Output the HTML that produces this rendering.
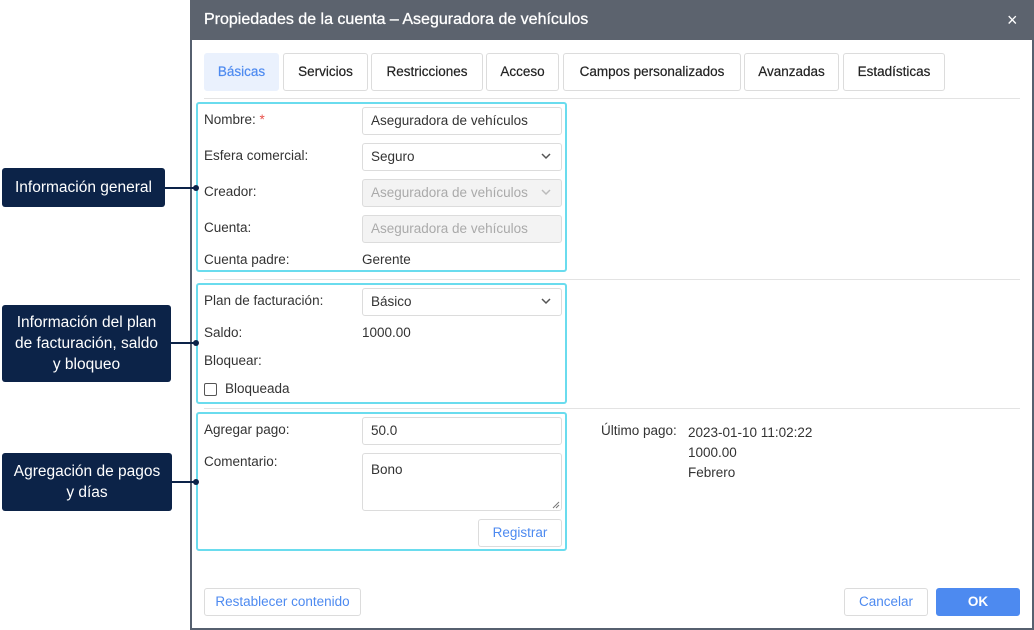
<!DOCTYPE html>
<html><head><meta charset="utf-8"><style>
*{box-sizing:border-box;margin:0;padding:0}
body{width:1034px;height:630px;background:#fff;font-family:"Liberation Sans",sans-serif;font-size:14px;color:#333;position:relative;overflow:hidden}
.a{position:absolute}
.dlg{left:190px;top:0;width:844px;height:630px;border:2px solid #56606f;border-top:0;background:#fff}
.title{left:190px;top:0;width:844px;height:40px;background:#5c636e;color:#fff;font-size:16px;line-height:40px;padding-left:14px;-webkit-text-stroke:0.3px #fff}
.tab{top:53px;height:38px;border:1px solid #dcdcdc;border-radius:3px;line-height:36px;text-align:center;color:#222;font-size:13.5px;-webkit-text-stroke:0.2px #222}
.sep{height:1px;background:#e3e3e3;left:204px;width:816px}
.box{border:2px solid #6adcee;border-radius:3px;left:196px;width:371px}
.lbl{left:204px;font-size:13.5px;color:#333}
.inp{left:362px;width:200px;height:28px;border:1px solid #dcdcdc;border-radius:3px;padding-left:8px;line-height:26px;font-size:13.5px;color:#333}
.dis{background:#f3f3f3;color:#aaa}
.chev{position:absolute;right:10px;top:8px;width:10px;height:8px}
.btn{height:28px;border:1px solid #dcdcdc;border-radius:3px;line-height:26px;text-align:center;color:#4d8af0;font-size:13.5px}
.call{left:2px;background:#0c2348;color:#fff;border-radius:3px;text-align:center;font-size:15.5px;line-height:21px;display:flex;align-items:center;justify-content:center}
.ln{height:2px;background:#0c2348}
.dot{width:6px;height:6px;border-radius:3px;background:#0c2348}
</style></head><body>
<div class="a dlg"></div>
<div class="a title">Propiedades de la cuenta – Aseguradora de vehículos</div>
<div class="a" style="left:1007px;top:11px;color:#fff;font-size:18px;line-height:18px">×</div>

<div class="a tab" style="left:204px;width:75px;background:#eaf1fd;border-color:#eaf1fd;color:#4d8af0;-webkit-text-stroke:0.2px #4d8af0">Básicas</div>
<div class="a tab" style="left:283px;width:85px">Servicios</div>
<div class="a tab" style="left:371px;width:112px">Restricciones</div>
<div class="a tab" style="left:486px;width:73px">Acceso</div>
<div class="a tab" style="left:563px;width:178px">Campos personalizados</div>
<div class="a tab" style="left:744px;width:95px">Avanzadas</div>
<div class="a tab" style="left:843px;width:102px">Estadísticas</div>
<div class="a sep" style="top:98px"></div>

<div class="a box" style="top:102px;height:170px"></div>
<div class="a lbl" style="top:112px">Nombre: <span style="color:#e8504a">*</span></div>
<div class="a inp" style="top:107px">Aseguradora de vehículos</div>
<div class="a lbl" style="top:148px">Esfera comercial:</div>
<div class="a inp" style="top:143px">Seguro<svg class="chev" viewBox="0 0 10 8"><path d="M1 2l4 4 4-4" fill="none" stroke="#555" stroke-width="1.5"/></svg></div>
<div class="a lbl" style="top:184px">Creador:</div>
<div class="a inp dis" style="top:179px">Aseguradora de vehículos<svg class="chev" viewBox="0 0 10 8"><path d="M1 2l4 4 4-4" fill="none" stroke="#bbb" stroke-width="1.5"/></svg></div>
<div class="a lbl" style="top:220px">Cuenta:</div>
<div class="a inp dis" style="top:215px">Aseguradora de vehículos</div>
<div class="a lbl" style="top:252px">Cuenta padre:</div>
<div class="a" style="left:362px;top:252px;font-size:13.5px">Gerente</div>
<div class="a sep" style="top:279px"></div>

<div class="a box" style="top:283px;height:121px"></div>
<div class="a lbl" style="top:293px">Plan de facturación:</div>
<div class="a inp" style="top:288px">Básico<svg class="chev" viewBox="0 0 10 8"><path d="M1 2l4 4 4-4" fill="none" stroke="#555" stroke-width="1.5"/></svg></div>
<div class="a lbl" style="top:325px">Saldo:</div>
<div class="a" style="left:362px;top:325px;font-size:13.5px">1000.00</div>
<div class="a lbl" style="top:353px">Bloquear:</div>
<div class="a" style="left:204px;top:383px;width:13px;height:13px;border:1px solid #555;border-radius:2px"></div>
<div class="a" style="left:225px;top:381px;font-size:13.5px">Bloqueada</div>
<div class="a sep" style="top:408px"></div>

<div class="a box" style="top:412px;height:139px"></div>
<div class="a lbl" style="top:422px">Agregar pago:</div>
<div class="a inp" style="top:417px">50.0</div>
<div class="a lbl" style="top:454px">Comentario:</div>
<div class="a inp" style="top:453px;height:58px;padding-top:7px;line-height:18px">Bono</div>
<svg class="a" style="left:552px;top:501px" width="8" height="8"><path d="M1 7L7 1M4 7L7 4" stroke="#777" stroke-width="1"/></svg>
<div class="a btn" style="left:478px;top:519px;width:84px">Registrar</div>

<div class="a" style="left:601px;top:423px;font-size:13.5px">Último pago:</div>
<div class="a" style="left:688px;top:423px;font-size:13.5px;line-height:20px">2023-01-10 11:02:22<br>1000.00<br>Febrero</div>

<div class="a btn" style="left:204px;top:588px;width:157px">Restablecer contenido</div>
<div class="a btn" style="left:844px;top:588px;width:84px">Cancelar</div>
<div class="a btn" style="left:936px;top:588px;width:84px;background:#4d8af0;border-color:#4d8af0;color:#fff;font-weight:bold">OK</div>

<div class="a call" style="top:168px;width:163px;height:39px">Información general</div>
<div class="a ln" style="left:165px;top:187px;width:30px"></div>
<div class="a dot" style="left:193px;top:185px"></div>
<div class="a call" style="top:305px;width:169px;height:77px">Información del plan<br>de facturación, saldo<br>y bloqueo</div>
<div class="a ln" style="left:171px;top:342px;width:24px"></div>
<div class="a dot" style="left:193px;top:340px"></div>
<div class="a call" style="top:453px;width:170px;height:58px">Agregación de pagos<br>y días</div>
<div class="a ln" style="left:172px;top:481px;width:23px"></div>
<div class="a dot" style="left:193px;top:479px"></div>
</body></html>
